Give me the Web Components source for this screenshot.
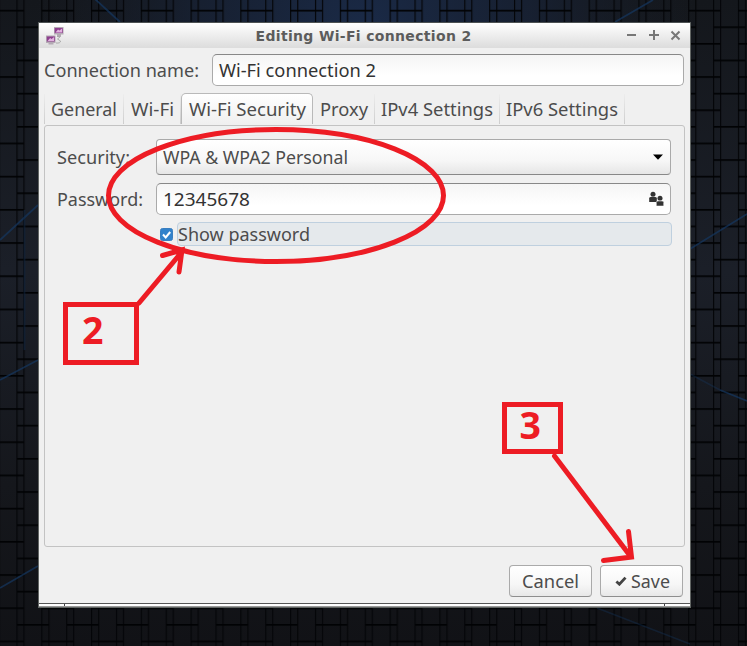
<!DOCTYPE html>
<html lang="en">
<head>
<meta charset="utf-8">
<title>Editing Wi-Fi connection 2</title>
<style>
html,body{margin:0;height:100%;overflow:hidden;background:#14161b}
body{font-family:"Noto Sans","Open Sans",sans-serif;color:#4c4c4c}
</style>
</head>
<body>
<desk-top>
  <app-window caption="Editing Wi-Fi connection 2">
    <name-row>
      <fit-text w="155" slot="label">Connection name:</fit-text>
      <text-entry><fit-text w="157" style="color:#333">Wi-Fi connection 2</fit-text></text-entry>
    </name-row>
    <tab-bar>
      <tab-item style="width:80px"><fit-text w="66">General</fit-text></tab-item>
      <tab-item style="width:57px"><fit-text w="43">Wi-Fi</fit-text></tab-item>
      <tab-item active style="width:132px"><fit-text w="117">Wi-Fi Security</fit-text></tab-item>
      <tab-item style="width:62px"><fit-text w="48">Proxy</fit-text></tab-item>
      <tab-item style="width:125px"><fit-text w="112">IPv4 Settings</fit-text></tab-item>
      <tab-item style="width:125px"><fit-text w="112">IPv6 Settings</fit-text></tab-item>
    </tab-bar>
    <tab-panel>
      <fit-text w="73">Security:</fit-text>
      <combo-box><fit-text w="185">WPA &amp; WPA2 Personal</fit-text></combo-box>
      <fit-text w="86">Password:</fit-text>
      <text-entry people><fit-text w="87" style="color:#333">12345678</fit-text></text-entry>
      <check-option><fit-text w="132">Show password</fit-text></check-option>
    </tab-panel>
    <button-row>
      <push-button><fit-text w="57">Cancel</fit-text></push-button>
      <push-button tick><fit-text w="39">Save</fit-text></push-button>
    </button-row>
  </app-window>
  <mark-up slot="over"></mark-up>
</desk-top>
<script>
const define = (name, html, setup) => customElements.define(name, class extends HTMLElement {
  connectedCallback() {
    if (this.shadowRoot) return;
    this.attachShadow({mode: 'open'}).innerHTML = html;
    if (setup) setup(this, this.shadowRoot);
  }
});

/* Label stretched to a fixed text width */
define('fit-text', `<style>:host{display:block;height:24px;flex:none}svg{display:block;overflow:visible}text{font-size:17.6px;fill:currentColor}</style>
<svg height="24"><text x="0" y="19" lengthAdjust="spacingAndGlyphs"></text></svg>`, (el, root) => {
  const w = el.getAttribute('w'), t = root.querySelector('text');
  el.style.width = w + 'px';
  root.querySelector('svg').setAttribute('width', w);
  t.setAttribute('textLength', w);
  t.textContent = el.textContent;
});

define('desk-top', `<style>
:host{display:block;position:relative;width:747px;height:646px;overflow:hidden;box-sizing:border-box;padding:22px 0 0 38px}
.wall{position:absolute;inset:0}
slot:not([name])::slotted(*){position:relative}
</style>
<svg class="wall" width="747" height="646">
<defs>
<linearGradient id="g" x2="0" y2="1"><stop offset="0" stop-color="#14171c"/><stop offset=".42" stop-color="#1b1f28"/><stop offset=".75" stop-color="#15171c"/><stop offset="1" stop-color="#111216"/></linearGradient>
<radialGradient id="b" cx="365" cy="30" r="330" gradientUnits="userSpaceOnUse"><stop offset="0" stop-color="#1a2a47"/><stop offset=".5" stop-color="#182338" stop-opacity=".75"/><stop offset="1" stop-color="#181e2a" stop-opacity="0"/></radialGradient>
<pattern id="p" width="49.76" height="33.2" x="-8.5" y="0" patternUnits="userSpaceOnUse">
<path d="M25.5 0V33.2M32.5 0V33.2M.6 0V33.2M7.7 0V33.2" stroke="#040508" stroke-width="1.2"/>
<path d="M0 10.6H32.5M25.5 27.2H49.76M0 27.2H7.7" stroke="#010204" stroke-width="1.8"/>
</pattern></defs>
<rect width="747" height="646" fill="url(#g)"/><rect width="747" height="646" fill="url(#b)"/>
<rect width="747" height="646" fill="url(#p)"/>
<g stroke="#153760" stroke-width="1.8" fill="none" opacity=".7">
<path d="M95 -1L120 22M615 22L653 0M0 240L38 205M690 249L747 214M0 588L38 566M0 380L38 360M720 390L747 401"/><path d="M24.5 210V350M597 608L690 644M690 374L720 390" opacity=".5"/></g>
</svg><slot></slot><slot name="over"></slot>`);

define('app-window', `<style>
:host{display:flex;flex-direction:column;width:653px;height:586px;box-sizing:border-box;border:1px solid #616563;border-top-color:#4d5253;background:#f0f0f0}
header{height:25px;flex:none;display:flex;align-items:center;background:linear-gradient(#fff,#dcdcdc);padding:0 8px 0 6px}
.i{width:20px;height:19px;flex:none;margin-top:-1px}
h1{flex:1;margin:0;font:bold 14px "DejaVu Sans",sans-serif;color:#5c5c5c;text-align:center;padding-left:36px;line-height:22px;letter-spacing:.33px}
main{height:555px;flex:none}
footer{height:2px;margin-top:0;border-top:1px solid #555;background:#fff;border-bottom:1px solid #999;display:flex;justify-content:space-between;padding:0 25px}
footer i{width:1px;background:#444}
</style><header>
<svg class="i" viewBox="0 0 20 19"><g fill="#b4aab4"><path d="M9 1h9.500v7.500H9zM1 9.500h9.500v7.500H1zM12 8h4v2.500h-4zM3.500 17h5v1.500h-5z"/></g><path d="M9.700 2h8v5h-8zM1.800 10.500h8v5h-8z" fill="#8d3f8e"/><path d="M10.500 6.500l2.500-3 1.500 1L17 2.500v4zM2.600 15l2.500-3 1.500 1 2.500-2v4z" fill="#e1b2df"/><path d="M12 10.500h3.500l-3 2.500 3 2q0 2.500-4.500 2" fill="none" stroke="#aaa"/></svg>
<h1></h1>
<svg width="56" height="18" fill="none" stroke="#777" stroke-width="2"><path d="M1 8h9M23 8h10M28 3v10"/><path d="M45.500 4.500l8 8m0-8l-8 8"/></svg>
</header><main><slot></slot></main><footer><i></i><i></i></footer>`, (el, root) => { root.querySelector('h1').textContent = el.getAttribute('caption'); });

define('name-row', `<style>:host{display:flex;align-items:center;padding:6px 6px 0 5px;height:32px}slot[name]::slotted(*){margin-right:13px}</style><slot name="label"></slot><slot></slot>`);

define('text-entry', `<style>
:host{display:flex;align-items:center;flex:1;height:32px;box-sizing:border-box;border:1px solid #aaa;border-top:1.5px solid #888;border-radius:5px;background:linear-gradient(#f5f5f5,#fff 70%);padding:0 6px;justify-content:space-between}
svg{display:none}:host([people]) svg{display:block}
</style><slot></slot><svg width="16" height="16" fill="#333"><circle cx="5" cy="3.3" r="2.500"/><path d="M1.200 11V7.200Q1.200 6 3 6h4q1.800 0 1.800 1.200V11z"/><circle cx="12" cy="7.300" r="2.500"/><path d="M8.300 15v-3.800q0-1.200 1.800-1.200h3.900q1.700 0 1.700 1.200V15z" stroke="#fff" stroke-width=".5"/></svg>`);

define('tab-bar', `<style>:host{display:flex;height:31px;margin:8px 0 0 5px}</style><slot></slot>`);

define('tab-item', `<style>
:host{display:flex;justify-content:center;box-sizing:border-box;height:30px;padding-top:3px;border-right:1px solid;border-image:linear-gradient(#eee,#ccc) 1}
:host(:first-child){border-left:1px solid}
:host([active]){border:1px solid #b9b9b9;border-image:none;border-bottom:0;border-radius:5px 5px 0 0;background:linear-gradient(#fff,#f0f0f0);padding-top:2px;height:31px;margin-top:-1px;padding-top:3px}
</style><slot></slot>`);

define('tab-panel', `<style>
:host{display:grid;grid-template-columns:99px 516px;grid-template-rows:36px 32px 24px;row-gap:8px;align-items:center;align-content:start;box-sizing:border-box;width:641px;height:422px;margin-left:5px;border:1px solid #c3c3c3;border-radius:3px;padding:13px 0 0 12px}
::slotted(text-entry),::slotted(combo-box){width:515px}
::slotted(check-option){grid-column:2}
</style><slot></slot>`);

define('combo-box', `<style>
:host{display:flex;align-items:center;justify-content:space-between;box-sizing:border-box;height:36px;border:1px solid #aaa;border-bottom:1.5px solid #888;border-radius:4px;background:linear-gradient(#fff,#f7f7f7 60%,#e6e6e6);padding:0 7px 0 6px}
</style><slot></slot><svg width="10" height="6"><path d="M0 .5h10L5 5.800z" fill="#000"/></svg>`);

define('check-option', `<style>
:host{display:flex;align-items:center;padding-left:4px;gap:4px;margin-top:-2px}
div{flex:1;height:22px;border:1px solid #bfd0df;border-radius:4px;background:#e5e9ec;display:flex;align-items:center}
</style><svg width="13" height="13"><rect x=".5" y=".5" width="12" height="12" rx="2" fill="#3282cb" stroke="#3a7fc0"/><path d="M3 6.500l2.700 3L10.200 4" stroke="#fff" stroke-width="2" fill="none"/></svg><div><slot></slot></div>`);

define('button-row', `<style>:host{display:flex;justify-content:flex-end;gap:8px;padding:18px 7px 0 0}</style><slot></slot>`);

define('push-button', `<style>
:host{display:flex;align-items:center;justify-content:center;gap:4px;width:83px;height:32px;box-sizing:border-box;border:1px solid #aaa;border-bottom-color:#8e8e8e;border-radius:4px;background:linear-gradient(#fff,#f7f7f7 60%,#e8e8e8)}
svg{display:none}:host([tick]) svg{display:block}:host([tick]){padding-left:2px}
</style><svg width="12" height="10"><path d="M1.400 5.400l3 2.800L10.500 1.600" fill="none" stroke="#444" stroke-width="2.800"/></svg><slot></slot>`);

/* Hand-drawn annotations lying over the window */
define('mark-up', `<style>:host{position:absolute;inset:0}svg{display:block}text{font:bold 37.5px "Noto Sans",sans-serif;fill:#ed1c24}</style>
<svg width="747" height="646"><g fill="none" stroke="#ed1c24" stroke-width="5" stroke-linecap="round">
<ellipse cx="276" cy="195.5" rx="167.5" ry="66"/>
<rect x="65.5" y="304.5" width="71" height="58"/><rect x="504.5" y="404.5" width="56" height="47"/>
<path d="M139 303L181 253M162.500 255.500L182 250L179 272M554.500 456L631 557M603.500 560.500L631.500 557L628.500 531.500"/></g>
<text x="82" y="343.5">2</text><text x="519.500" y="438.5">3</text></svg>`);
</script>
</body>
</html>
